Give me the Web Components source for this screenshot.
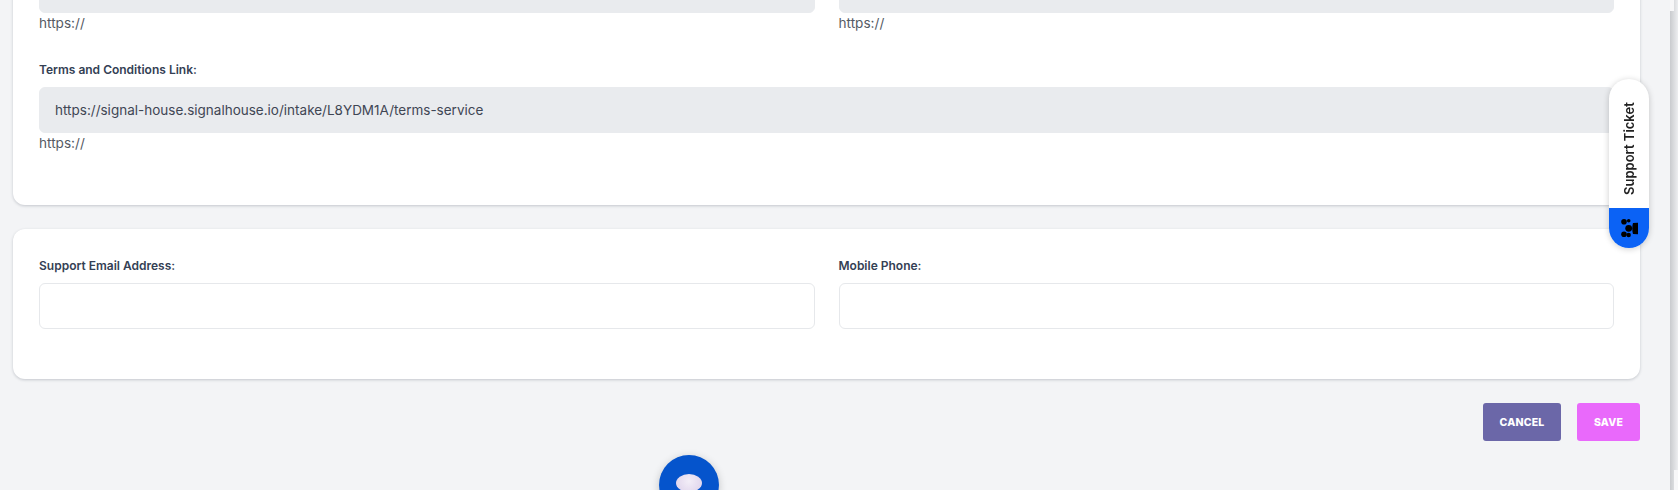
<!DOCTYPE html>
<html>
<head>
<meta charset="utf-8">
<style>
  html, body { margin: 0; height: 100%; overflow: hidden; background: #f3f4f6; }
  body { font-family: Inter, "Liberation Sans", sans-serif; }
</style>
</head>
<body>
<intake-page>
  <form-card style="margin-top:-62px;padding-bottom:51px">
    <form-row>
      <form-field hint="https://" readonly></form-field>
      <form-field hint="https://" readonly></form-field>
    </form-row>
    <form-row>
      <form-field label="Terms and Conditions Link:" value="https://signal-house.signalhouse.io/intake/L8YDM1A/terms-service" hint="https://" readonly></form-field>
    </form-row>
  </form-card>
  <form-card>
    <form-row>
      <form-field label="Support Email Address:"></form-field>
      <form-field label="Mobile Phone:"></form-field>
    </form-row>
  </form-card>
  <form-actions></form-actions>
</intake-page>
<support-tab></support-tab>
<chat-bubble></chat-bubble>
<page-scrollbar></page-scrollbar>
<script>
class IntakePage extends HTMLElement {
  constructor() {
    super();
    this.attachShadow({ mode: "open" });
    this.shadowRoot.innerHTML = `
      <style>
        :host {
          display: flex;
          flex-direction: column;
          gap: 24px;
          box-sizing: border-box;
          height: 490px;
          overflow: hidden;
          padding: 0 38px 0 13px;
        }
      </style>
      <slot></slot>
    `;
  }
}

class FormCard extends HTMLElement {
  constructor() {
    super();
    this.attachShadow({ mode: "open" });
    this.shadowRoot.innerHTML = `
      <style>
        :host {
          display: flex;
          flex-direction: column;
          gap: 28px;
          flex: none;
          padding: 29px 26px 50px;
          background: #fff;
          border-radius: 12px;
          box-shadow: 0 1px 3px rgba(30, 40, 60, 0.22);
        }
      </style>
      <slot></slot>
    `;
  }
}

class FormRow extends HTMLElement {
  constructor() {
    super();
    this.attachShadow({ mode: "open" });
    this.shadowRoot.innerHTML = `
      <style>
        :host { display: flex; gap: 24px; }
        ::slotted(*) { flex: 1 1 0; min-width: 0; }
      </style>
      <slot></slot>
    `;
  }
}

class FormField extends HTMLElement {
  constructor() {
    super();
    this.attachShadow({ mode: "open" });
  }

  connectedCallback() {
    const label = this.getAttribute("label");
    const value = this.getAttribute("value") || "";
    const hint = this.getAttribute("hint");
    const readonly = this.hasAttribute("readonly");
    this.shadowRoot.innerHTML = `
      <style>
        :host { display: block; }
        label {
          display: block;
          margin-bottom: 9px;
          font-size: 12px;
          line-height: 16px;
          font-weight: 600;
          color: #344054;
        }
        .box {
          box-sizing: border-box;
          height: 46px;
          padding: 0 15px;
          display: flex;
          align-items: center;
          font-size: 13.5px;
          color: #3f4654;
          border-radius: 6px;
          border: 1px solid ${readonly ? "#e9ebee" : "#e6e8eb"};
          background: ${readonly ? "#e9ebee" : "#fff"};
        }
        .hint {
          font-size: 13.6px;
          line-height: 21px;
          color: #555a64;
        }
      </style>
      ${label ? `<label>${label}</label>` : ""}
      <div class="box">${value}</div>
      ${hint ? `<div class="hint">${hint}</div>` : ""}
    `;
  }
}

class FormActions extends HTMLElement {
  constructor() {
    super();
    this.attachShadow({ mode: "open" });
    this.shadowRoot.innerHTML = `
      <style>
        :host { display: flex; justify-content: flex-end; gap: 16px; flex: none; }
        button {
          height: 38px;
          border: 0;
          border-radius: 3px;
          color: #fff;
          font: 800 10.5px Inter, "Liberation Sans", sans-serif;
          letter-spacing: 0.2px;
        }
        .cancel { width: 78px; background: #6b67a8; }
        .save { width: 63px; background: #e969fb; }
      </style>
      <button class="cancel">CANCEL</button>
      <button class="save">SAVE</button>
    `;
  }
}

class SupportTab extends HTMLElement {
  constructor() {
    super();
    this.attachShadow({ mode: "open" });
    this.shadowRoot.innerHTML = `
      <style>
        :host {
          position: fixed;
          left: 1609px;
          top: 79px;
          width: 40px;
          height: 169px;
          display: flex;
          flex-direction: column;
          border-radius: 20px;
          overflow: hidden;
          background: #fff;
          box-shadow: 0 1px 6px rgba(0, 0, 0, 0.2);
        }
        .label {
          flex: 1;
          margin-top: 10px;
          display: flex;
          align-items: center;
          justify-content: center;
          writing-mode: vertical-rl;
          transform: rotate(180deg);
          font: 600 13px Inter, sans-serif;
          color: #222;
        }
        .logo {
          height: 40px;
          display: flex;
          align-items: center;
          justify-content: center;
          background: #0b62f5;
        }
      </style>
      <div class="label">Support Ticket</div>
      <div class="logo">
        <svg width="18" height="20" viewBox="0 0 18 20" fill="#000">
          <circle cx="4" cy="3.8" r="2.8"/>
          <circle cx="8.7" cy="2.7" r="1.8"/>
          <circle cx="8.7" cy="10.3" r="3.4"/>
          <circle cx="4" cy="16.3" r="2.8"/>
          <circle cx="8.7" cy="17" r="2.2"/>
          <path d="M13 5L18 4.7V16.3L13 16C12 13 12 8 13 5z"/>
        </svg>
      </div>
    `;
  }
}

class ChatBubble extends HTMLElement {
  constructor() {
    super();
    this.attachShadow({ mode: "open" });
    this.shadowRoot.innerHTML = `
      <style>
        :host {
          position: fixed;
          left: 659px;
          top: 455px;
          width: 60px;
          height: 60px;
          display: flex;
          justify-content: center;
          border-radius: 50%;
          background: #0554cc;
          box-shadow: 0 2px 8px rgba(0, 0, 0, 0.2);
        }
        .dot {
          margin-top: 19px;
          width: 26px;
          height: 18px;
          border-radius: 50%;
          background: radial-gradient(circle at 50% 40%, #f3eef8, #dcd0ea);
        }
      </style>
      <div class="dot"></div>
    `;
  }
}

class PageScrollbar extends HTMLElement {
  constructor() {
    super();
    this.attachShadow({ mode: "open" });
    this.shadowRoot.innerHTML = `
      <style>
        :host {
          position: fixed;
          right: 0;
          top: 0;
          width: 8px;
          height: 490px;
          background: linear-gradient(90deg, #c9cbce, #edeef0);
        }
        .top { position: absolute; left: 0; top: 0; width: 4px; height: 11px; background: #f7f7f8; }
        .bottom { position: absolute; right: 0; bottom: 0; width: 4px; height: 20px; background: #f7f7f8; }
      </style>
      <div class="top"></div>
      <div class="bottom"></div>
    `;
  }
}

customElements.define("intake-page", IntakePage);
customElements.define("form-card", FormCard);
customElements.define("form-row", FormRow);
customElements.define("form-field", FormField);
customElements.define("form-actions", FormActions);
customElements.define("support-tab", SupportTab);
customElements.define("chat-bubble", ChatBubble);
customElements.define("page-scrollbar", PageScrollbar);
</script>
</body>
</html>
